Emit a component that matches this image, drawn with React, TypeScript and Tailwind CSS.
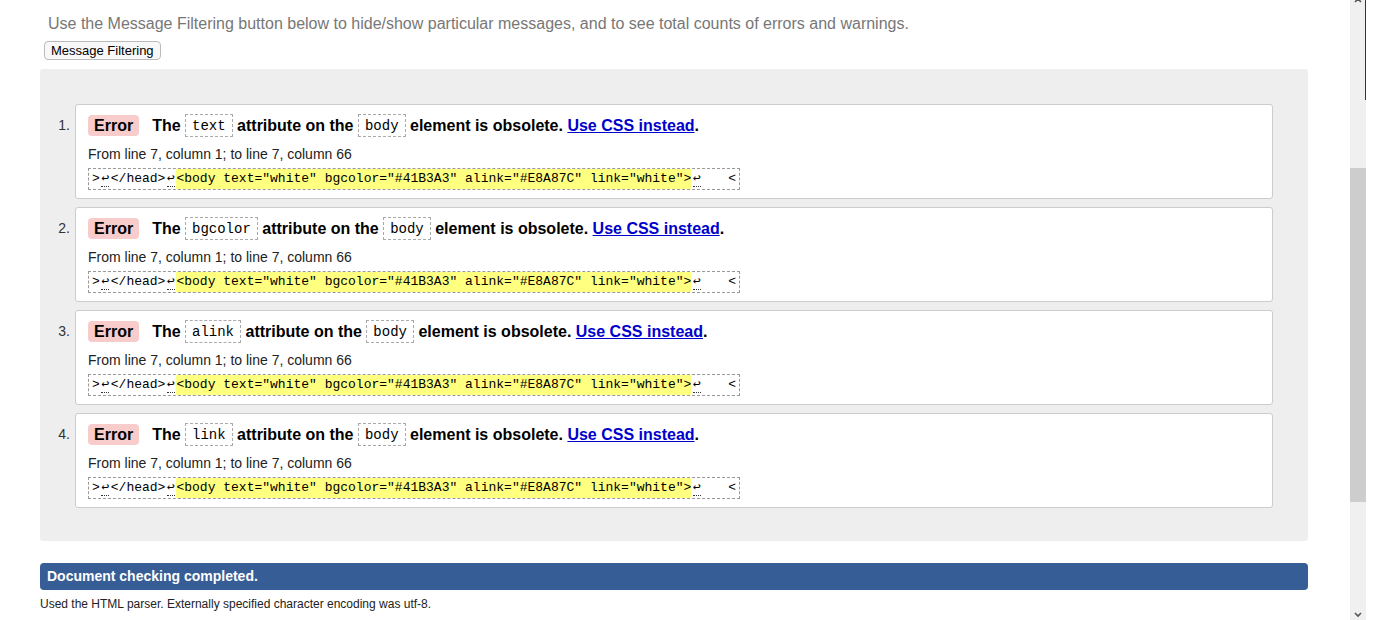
const attrs = ['text', 'bgcolor', 'alink', 'link'];

function Lf() {
  return (
    <span className="inline-block w-[11px] text-center">
      <span className="border-b border-dotted border-[#333]">↩</span>
    </span>
  );
}

function Extract() {
  return (
    <code className="flex h-[22px] w-[652px] items-center whitespace-pre border border-dashed border-[#999] px-[3px] text-[13px] leading-[20px] text-black [font-family:'Liberation_Mono','DejaVu_Sans_Mono',monospace]">
      {'>'}
      <Lf />
      {'</head>'}
      <Lf />
      <span className="bg-[#ffff80]">
        {'<body text="white" bgcolor="#41B3A3" alink="#E8A87C" link="white">'}
      </span>
      <Lf />
      <span className="flex-1 text-right">{'<'}</span>
    </code>
  );
}

function Code({ children }: { children: string }) {
  return (
    <code className="flex h-[23px] items-center border border-dashed border-[#aaa] px-[6px] pt-[2px] text-[14px] font-normal leading-[19px] [font-family:'Liberation_Mono','DejaVu_Sans_Mono',monospace]">
      {children}
    </code>
  );
}

export default function App() {
  return (
    <div className="flex h-[620px] w-[1378px] overflow-hidden bg-white text-[#333] [font-family:'Liberation_Sans',Arial,sans-serif]">
      <div className="flex-1 pl-[40px] pr-[42px]">
        <p className="pl-[8px] pt-[14px] text-[16px] leading-[20px] text-[#777]">
          Use the Message Filtering button below to hide/show particular messages, and to see total counts of errors and warnings.
        </p>
        <div className="mt-[7px] flex pl-[4px]">
          <button className="h-[19px] rounded-[4px] border border-[#bbb] bg-[#f8f8f8] px-[6px] text-[13px] leading-[17px] text-black">
            Message Filtering
          </button>
        </div>

        <div className="mt-[9px] flex flex-col gap-[8px] rounded-[3px] bg-[#eeeeee] pb-[33px] pr-[35px] pt-[35px]">
          {attrs.map((a, i) => (
            <div key={a} className="flex">
              <div className="w-[30px] pt-[10px] text-right text-[14px] leading-[23px] text-[#333]">
                {i + 1}.
              </div>
              <div className="ml-[5px] flex-1 rounded-[3px] border border-[#ccc] bg-white px-[12px] pb-[8px] pt-[9px]">
                <div className="flex h-[23px] items-center whitespace-pre text-[16px] font-bold leading-[23px] text-black">
                  <span className="rounded-[4px] bg-[#f9cccc] px-[6px] leading-[21px]">Error</span>
                  <span className="ml-[13px]">{'The '}</span>
                  <Code>{a}</Code>
                  <span>{' attribute on the '}</span>
                  <Code>body</Code>
                  <span>{' element is obsolete. '}</span>
                  <a href="#" className="text-[#0000cc] underline">
                    Use CSS instead
                  </a>
                  <span>.</span>
                </div>
                <p className="mt-[8px] h-[18px] text-[14px] leading-[18px] text-[#222]">
                  From line 7, column 1; to line 7, column 66
                </p>
                <div className="mt-[5px] flex">
                  <Extract />
                </div>
              </div>
            </div>
          ))}
        </div>

        <div className="mt-[22px] flex h-[27px] items-center rounded-[4px] bg-[#365d95] px-[7px] text-[14px] font-bold text-white">
          Document checking completed.
        </div>
        <p className="mt-[7px] text-[12px] leading-[14px] text-[#222]">
          Used the HTML parser. Externally specified character encoding was utf-8.
        </p>
      </div>

      <div className="relative flex w-[16px] flex-col bg-[#f0f0f0]">
        <div className="h-[168px]" />
        <div className="h-[334px] bg-[#cdcdcd]" />
        <div className="absolute right-0 top-0 h-[100px] w-[1px] bg-[#333]" />
        <svg className="absolute left-[4px] top-[-3px]" width="8" height="6" viewBox="0 0 8 6">
          <path d="M1 5 L4 2 L7 5" stroke="#555" strokeWidth="1.6" fill="none" />
        </svg>
        <svg className="absolute bottom-[2px] left-[4px]" width="8" height="6" viewBox="0 0 8 6">
          <path d="M1 1 L4 4 L7 1" stroke="#555" strokeWidth="1.6" fill="none" />
        </svg>
      </div>
      <div className="w-[12px]" />
    </div>
  );
}
